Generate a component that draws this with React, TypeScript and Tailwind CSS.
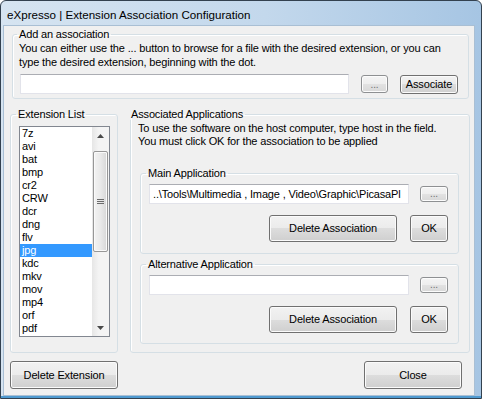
import React from 'react';

const extensions = ['7z', 'avi', 'bat', 'bmp', 'cr2', 'CRW', 'dcr', 'dng', 'flv', 'jpg', 'kdc', 'mkv', 'mov', 'mp4', 'orf', 'pdf'];

const Btn = ({ children, className = '' }: { children: React.ReactNode; className?: string }) => (
  <div
    className={`flex items-center justify-center rounded-[3px] border border-[#707070] bg-[linear-gradient(to_bottom,#f2f2f2_0%,#ebebeb_50%,#dddddd_50%,#cfcfcf_100%)] shadow-[inset_0_0_0_1px_#fbfbfb] text-black ${className}`}
  >
    {children}
  </div>
);

// small "..." browse button, looks a bit greyed out
const Browse = ({ className = '' }: { className?: string }) => (
  <div
    className={`flex items-end justify-center pb-[2px] rounded-[3px] border border-[#8e9092] bg-[linear-gradient(to_bottom,#f4f4f4_0%,#eeeeee_50%,#e2e2e2_50%,#d8d8d8_100%)] shadow-[inset_0_0_0_1px_#fcfcfc] text-[#6f6f6f] text-[10px] leading-[10px] ${className}`}
  >
    ...
  </div>
);

const TextBox = ({ children, className = '' }: { children?: React.ReactNode; className?: string }) => (
  <div
    className={`flex items-center overflow-hidden whitespace-nowrap bg-white border border-[#e2e3ea] border-t-[#abadb3] pl-[2px] ${className}`}
  >
    {children}
  </div>
);

const Group = ({
  label,
  className = '',
  legendClass = 'ml-[-2px]',
  children,
}: {
  label: string;
  className?: string;
  legendClass?: string;
  children?: React.ReactNode;
}) => (
  <fieldset className={`rounded-[3px] border border-[#d5dfe5] shadow-[inset_1px_1px_0_#ffffff] ${className}`}>
    <legend className={`px-[2px] leading-[12px] ${legendClass}`}>{label}</legend>
    {children}
  </fieldset>
);

const Arrow = ({ up }: { up?: boolean }) => (
  <svg width="7" height="4" viewBox="0 0 7 4">
    <polygon points={up ? '0,4 7,4 3.5,0' : '0,0 7,0 3.5,4'} fill="#4a4a4a" />
  </svg>
);

const ExtensionList = () => (
  <div className="mt-[6px] flex w-[91px] h-[211px] border border-[#828790] bg-white">
    <div className="flex-1 flex flex-col">
      {extensions.map((ext) => (
        <div
          key={ext}
          className={`h-[13px] leading-[13px] pl-[2px] ${ext === 'jpg' ? 'bg-[#3399ff] text-white' : 'text-black'}`}
        >
          {ext}
        </div>
      ))}
    </div>
    {/* vertical scrollbar */}
    <div className="w-[17px] flex flex-col bg-[linear-gradient(to_right,#e6e6e6,#f4f4f4_40%,#f4f4f4)]">
      <div className="h-[17px] flex items-center justify-center">
        <Arrow up />
      </div>
      <div className="flex-1 flex flex-col pt-[7px]">
        <div className="mx-[1px] h-[101px] flex items-center justify-center rounded-[2px] border border-[#979797] bg-[linear-gradient(to_right,#f3f3f3,#e9e9e9_50%,#d7d7d7)] shadow-[inset_0_0_0_1px_#fafafa]">
          <svg width="7" height="6" viewBox="0 0 7 6">
            <rect x="0" y="0" width="7" height="1" fill="#6b6b6b" />
            <rect x="0" y="2" width="7" height="1" fill="#6b6b6b" />
            <rect x="0" y="4" width="7" height="1" fill="#6b6b6b" />
          </svg>
        </div>
      </div>
      <div className="h-[17px] flex items-center justify-center">
        <Arrow />
      </div>
    </div>
  </div>
);

const AppGroup = ({ label, value, className = '' }: { label: string; value?: string; className?: string }) => (
  <Group label={label} legendClass="ml-[-3px]" className={`ml-[9px] w-[319px] pl-[8px] pr-[10px] ${className}`}>
    <div className="mt-[5px] flex items-center">
      <TextBox className="w-[260px] h-[20px] pl-[3px]">{value}</TextBox>
      <Browse className="ml-[11px] w-[28px] h-[16px]" />
    </div>
    <div className="mt-[11px] flex justify-end gap-[13px]">
      <Btn className="w-[128px] h-[27px]">Delete Association</Btn>
      <Btn className="w-[38px] h-[27px]">OK</Btn>
    </div>
  </Group>
);

export default function App() {
  return (
    <div className="w-[482px] h-[399px] flex flex-col overflow-hidden rounded-t-[6px] border border-[#33414f] bg-[linear-gradient(to_right,#d6e4f1,#c3d8ec_55%,#a6c5e3)] font-['Liberation_Sans',Arial,sans-serif] text-[11px] tracking-[-0.15px] text-black">
      <div className="h-[24px] shrink-0 flex items-center pl-[6px] pt-[3px] text-[11.6px] tracking-[0px]">
        eXpresso | Extension Association Configuration
      </div>

      <div className="h-[371px] ml-[2px] mr-[6px] border border-[#a9bfd4] bg-[#f0f0f0]">
        {/* Add an association */}
        <Group label="Add an association" className="mt-[2px] ml-[8px] w-[457px] h-[71px] pl-[6px]">
          <div className="leading-[14px] pt-[1px]">
            <div>You can either use the ... button to browse for a file with the desired extension, or you can</div>
            <div>type the desired extension, beginning with the dot.</div>
          </div>
          <div className="mt-[5px] flex items-center">
            <TextBox className="ml-[1px] w-[329px] h-[20px]" />
            <Browse className="ml-[12px] w-[27px] h-[18px]" />
            <Btn className="ml-[12px] w-[58px] h-[19px]">Associate</Btn>
          </div>
        </Group>

        <div className="mt-[9px] flex">
          <Group label="Extension List" legendClass="ml-[-3px]" className="ml-[6px] w-[108px] h-[245px] pl-[8px]">
            <ExtensionList />
          </Group>

          <Group label="Associated Applications" className="ml-[12px] w-[340px] h-[245px] pl-0">
            <div className="pl-[7px] pt-[2px] leading-[13px]">
              <div>To use the software on the host computer, type host in the field.</div>
              <div>You must click OK for the association to be applied</div>
            </div>
            <AppGroup
              label="Main Application"
              className="mt-[19px] h-[87px]"
              value={'..\\Tools\\Multimedia , Image , Video\\Graphic\\PicasaPl'}
            />
            <AppGroup label="Alternative Application" className="mt-[4px] h-[86px]" />
          </Group>
        </div>

        <div className="mt-[8px] flex justify-between pl-[6px] pr-[12px]">
          <Btn className="w-[108px] h-[28px]">Delete Extension</Btn>
          <Btn className="w-[98px] h-[28px]">Close</Btn>
        </div>
      </div>
      <div className="h-[2px] shrink-0 bg-[#4f9ad0]" />
    </div>
  );
}
